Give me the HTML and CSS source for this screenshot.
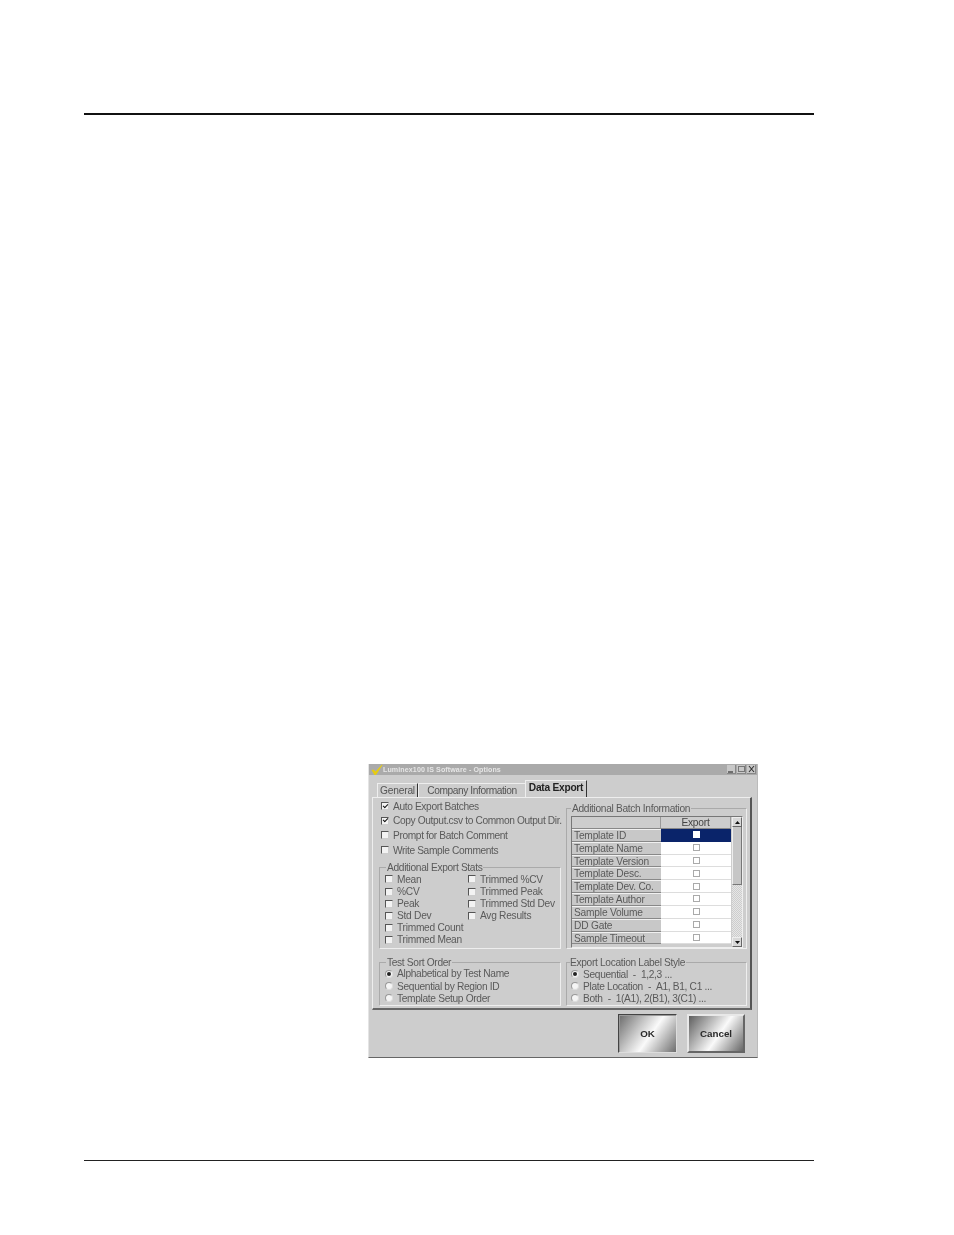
FILE: index.html
```html
<!DOCTYPE html>
<html lang="en">
<head>
<meta charset="utf-8">
<title>Luminex100 IS Software - Options</title>
<link rel="stylesheet" href="styles.css">
</head>
<body>
<div class="page">
  <div class="rule-top"></div>
  <div class="dialog">
    <div class="titlebar">
      <svg class="logo" viewBox="0 0 12 11" width="12" height="11"><path d="M0.5 6 L2.5 5.5 L4.5 7.5 L11 0.5 L11.5 1 L5 11 L3.5 11 Z" fill="#e6cc12"/></svg>
      <span class="title-text">Luminex100 IS Software - Options</span>
      <div class="win-btns">
        <span class="win-btn"><svg viewBox="0 0 9 8" width="9" height="8"><path d="M1 7H6" stroke="#333" stroke-width="1.2"/></svg></span>
        <span class="win-btn"><svg viewBox="0 0 9 8" width="9" height="8"><rect x="1.5" y="1.5" width="6" height="5" fill="none" stroke="#777"/></svg></span>
        <span class="win-btn"><svg viewBox="0 0 9 8" width="9" height="8"><path d="M2 1L7 7M7 1L2 7" stroke="#333" stroke-width="1.1"/></svg></span>
      </div>
    </div>
    <div class="tabs">
      <span class="tab tab-general">General</span>
      <span class="tab tab-company">Company Information</span>
      <span class="tab tab-active">Data Export</span>
    </div>
    <div class="panel">
      <div class="col col-left">
        <div class="checks">
          <label class="row"><span class="cb on"></span>Auto Export Batches</label>
          <label class="row"><span class="cb on"></span>Copy Output.csv to Common Output Dir.</label>
          <label class="row"><span class="cb"></span>Prompt for Batch Comment</label>
          <label class="row"><span class="cb"></span>Write Sample Comments</label>
        </div>
        <fieldset class="group group-stats">
          <legend>Additional Export Stats</legend>
          <div class="stats">
            <div class="stats-col stats-col-a">
              <label class="row-s"><span class="cb"></span>Mean</label>
              <label class="row-s"><span class="cb"></span>%CV</label>
              <label class="row-s"><span class="cb"></span>Peak</label>
              <label class="row-s"><span class="cb"></span>Std Dev</label>
              <label class="row-s"><span class="cb"></span>Trimmed Count</label>
              <label class="row-s"><span class="cb"></span>Trimmed Mean</label>
            </div>
            <div class="stats-col">
              <label class="row-s"><span class="cb"></span>Trimmed %CV</label>
              <label class="row-s"><span class="cb"></span>Trimmed Peak</label>
              <label class="row-s"><span class="cb"></span>Trimmed Std Dev</label>
              <label class="row-s"><span class="cb"></span>Avg Results</label>
            </div>
          </div>
        </fieldset>
        <fieldset class="group group-sort">
          <legend>Test Sort Order</legend>
          <label class="row-s"><span class="rb on"></span>Alphabetical by Test Name</label>
          <label class="row-s"><span class="rb"></span>Sequential by Region ID</label>
          <label class="row-s"><span class="rb"></span>Template Setup Order</label>
        </fieldset>
      </div>
      <div class="col col-right">
        <fieldset class="group group-batch">
          <legend>Additional Batch Information</legend>
          <div class="grid-wrap">
            <div class="grid">
              <div class="gh"></div><div class="gh gh-export">Export</div>
              <div class="gl">Template ID</div><div class="gc sel"><span class="box"></span></div>
              <div class="gl">Template Name</div><div class="gc"><span class="box"></span></div>
              <div class="gl">Template Version</div><div class="gc"><span class="box"></span></div>
              <div class="gl">Template Desc.</div><div class="gc"><span class="box"></span></div>
              <div class="gl">Template Dev. Co.</div><div class="gc"><span class="box"></span></div>
              <div class="gl">Template Author</div><div class="gc"><span class="box"></span></div>
              <div class="gl">Sample Volume</div><div class="gc"><span class="box"></span></div>
              <div class="gl">DD Gate</div><div class="gc"><span class="box"></span></div>
              <div class="gl">Sample Timeout</div><div class="gc"><span class="box"></span></div>
            </div>
            <div class="scrollbar">
              <span class="arrow"><svg viewBox="0 0 7 5" width="7" height="5"><path d="M3.5 1L6 4H1Z" fill="#111"/></svg></span>
              <span class="thumb"></span>
              <span class="track"></span>
              <span class="arrow"><svg viewBox="0 0 7 5" width="7" height="5"><path d="M3.5 4L6 1H1Z" fill="#111"/></svg></span>
            </div>
          </div>
        </fieldset>
        <fieldset class="group group-label">
          <legend>Export Location Label Style</legend>
          <label class="row-s"><span class="rb on"></span>Sequential&nbsp; -&nbsp; 1,2,3 ...</label>
          <label class="row-s"><span class="rb"></span>Plate Location&nbsp;&nbsp;-&nbsp;&nbsp;A1, B1, C1 ...</label>
          <label class="row-s"><span class="rb"></span>Both&nbsp; -&nbsp; 1(A1), 2(B1), 3(C1) ...</label>
        </fieldset>
      </div>
    </div>
    <div class="actions">
      <button class="btn btn-ok" type="button">OK</button>
      <button class="btn btn-cancel" type="button">Cancel</button>
    </div>
  </div>
  <div class="rule-bottom"></div>
</div>
</body>
</html>
```
FILE: styles.css
```css
html, body { margin: 0; padding: 0; background: #fff; }
body { font-family: "Liberation Sans", Arial, sans-serif; color: #5a5a5a; font-size: 10.2px; letter-spacing: -.33px; }
.page { width: 954px; height: 1235px; overflow: hidden; }
.rule-top { height: 2px; background: #111; margin: 113px 140px 0 84px; }
.rule-bottom { height: 1px; background: #222; margin: 102px 140px 0 84px; }

.dialog { width: 390px; height: 294px; margin: 649px 0 0 368px; background: #cdcdcd; box-sizing: border-box; border-left: 1px solid #e4e4e4; border-bottom: 1px solid #666; border-right: 1px solid #bbb; filter: blur(.35px); }

.titlebar { height: 11px; background: #aaaaaa; display: flex; align-items: center; padding: 0 1px 0 2px; }
.logo { margin-right: 0; flex: none; }
.title-text { font-size: 7.1px; font-weight: bold; color: #e6e6e6; letter-spacing: .1px; }
.win-btns { margin-left: auto; display: flex; gap: 1px; }
.win-btn { width: 9px; height: 9px; background: #c8c8c8; display: block; line-height: 0; border-right: 1px solid #888; border-bottom: 1px solid #888; box-sizing: border-box; }

.tabs { display: flex; align-items: flex-end; height: 22px; padding-left: 8px; }
.tab { height: 14px; line-height: 14px; box-sizing: border-box; font-size: 10.2px; color: #555; border-left: 1px solid #eee; border-top: 1px solid #eee; text-align: center; }
.tab-general { width: 41px; border-right: 1px solid #333; letter-spacing: -.2px; }
.tab-company { width: 107px; letter-spacing: -.42px; }
.tab-active { width: 62px; height: 17px; line-height: 14px; font-weight: bold; color: #222; font-size: 10.2px; letter-spacing: -.25px; border-right: 1px solid #333; }

.panel { width: 380px; height: 213px; margin-left: 3px; box-sizing: border-box; border-top: 1px solid #eee; border-left: 1px solid #eee; border-right: 2px solid #555; border-bottom: 2px solid #666; display: flex; padding-left: 6px; }
.col { display: flex; flex-direction: column; }
.col-left { width: 184px; }
.col-right { width: 183px; margin-left: 3px; }

.checks { display: flex; flex-direction: column; padding-top: 1px; }
.row { height: 14.6px; display: flex; align-items: center; white-space: nowrap; padding-left: 2px; letter-spacing: -.37px; }
.row .cb { margin-right: 4px; }
.row-s { height: 12.1px; display: flex; align-items: center; white-space: nowrap; }
.row-s .cb, .row-s .rb { margin-right: 4px; }

.cb { width: 6px; height: 6px; flex: none; background: #f3f3f3; border: 1px solid #555; border-right-color: #ccc; border-bottom-color: #ccc; position: relative; }
.cb.on::after { content: ""; position: absolute; left: .5px; top: .3px; width: 4px; height: 2px; border: solid #111; border-width: 0 0 1.4px 1.4px; transform: rotate(-45deg); }
.rb { width: 6px; height: 6px; flex: none; border-radius: 50%; background: #f5f5f5; border: 1px solid #999; border-right-color: #ddd; border-bottom-color: #ddd; position: relative; }
.rb.on::after { content: ""; position: absolute; left: 1px; top: 1px; width: 4px; height: 4px; border-radius: 50%; background: #222; }

.group { margin: 0; padding: 0 0 0 5px; min-width: 0; box-sizing: border-box; border: 1px solid #aaa; border-right-color: #eee; border-bottom-color: #eee; }
.group legend { padding: 0 1px; margin-left: 1px; line-height: 11px; height: 11px; }
.group-stats { width: 182px; height: 87px; margin-top: 5px; }
.stats { display: flex; letter-spacing: -.27px; }
.stats-col-a { width: 83px; }
.group-sort { width: 182px; height: 49px; margin-top: 7.5px; }

.group-batch { width: 181px; height: 146px; margin-top: 5px; padding: 0 0 0 4px; }
.group-batch legend { margin-left: 0; }
.grid-wrap { display: flex; width: 172px; height: 132px; margin-top: 2px; border: 1px solid #777; border-right-color: #eee; border-bottom-color: #eee; box-sizing: border-box; }
.grid { width: 159px; display: grid; grid-template-columns: 89px 70px; grid-template-rows: 12px repeat(9, 12.82px); letter-spacing: -.2px; }
.gh { background: #cdcdcd; border-right: 1px solid #999; border-bottom: 1px solid #888; box-sizing: border-box; }
.gh-export { text-align: center; line-height: 12px; color: #444; }
.gl { background: #c8c8c8; border-top: 1px solid #f0f0f0; border-bottom: 1px solid #888; box-sizing: border-box; padding-left: 2px; line-height: 11px; white-space: nowrap; overflow: hidden; }
.gc { background: #fff; border-bottom: 1px solid #ddd; box-sizing: border-box; display: flex; align-items: center; justify-content: center; }
.gc.sel { background: #0a246a; border-bottom-color: #0a246a; }
.box { width: 5px; height: 5px; border: 1px solid #aaa; background: #fff; display: block; }
.sel .box { border-color: #fff; }

.scrollbar { width: 10px; display: flex; flex-direction: column; background: #cdcdcd; margin-left: 1px; }
.arrow { height: 10px; background: #d8d8d8; border: 1px solid #eee; border-right-color: #666; border-bottom-color: #666; box-sizing: border-box; display: flex; align-items: center; justify-content: center; flex: none; }
.thumb { height: 58px; background: #c6c6c6; border-left: 1px solid #eee; border-right: 1px solid #777; border-bottom: 1px solid #777; box-sizing: border-box; flex: none; }
.track { flex: 1; background: repeating-conic-gradient(#cdcdcd 0 25%, #e6e6e6 0 50%) 0 0 / 2px 2px; }

.group-label { width: 181px; height: 49px; margin-top: 8px; padding-left: 4px; }
.group-label legend { margin-left: -1px; padding: 0 1px 0 0; }

.actions { display: flex; justify-content: flex-end; gap: 10px; padding: 4px 12px 0 0; }
.btn { height: 39px; padding: 0; font: bold 9.8px "Liberation Sans", Arial, sans-serif; color: #2a2a2a; letter-spacing: 0; }
.btn-ok { width: 59px; background: linear-gradient(125deg, #6a6a6a 0%, #c8c8c8 35%, #fafafa 55%, #6e6e6e 100%); border: 1px solid; border-color: #444 #ddd #ddd #444; box-shadow: inset 1px 1px 0 #999; }
.btn-cancel { width: 58px; background: linear-gradient(125deg, #5e5e5e 0%, #c0c0c0 35%, #fafafa 55%, #666 100%); border: 2px solid; border-color: #e8e8e8 #666 #666 #e8e8e8; }
```
